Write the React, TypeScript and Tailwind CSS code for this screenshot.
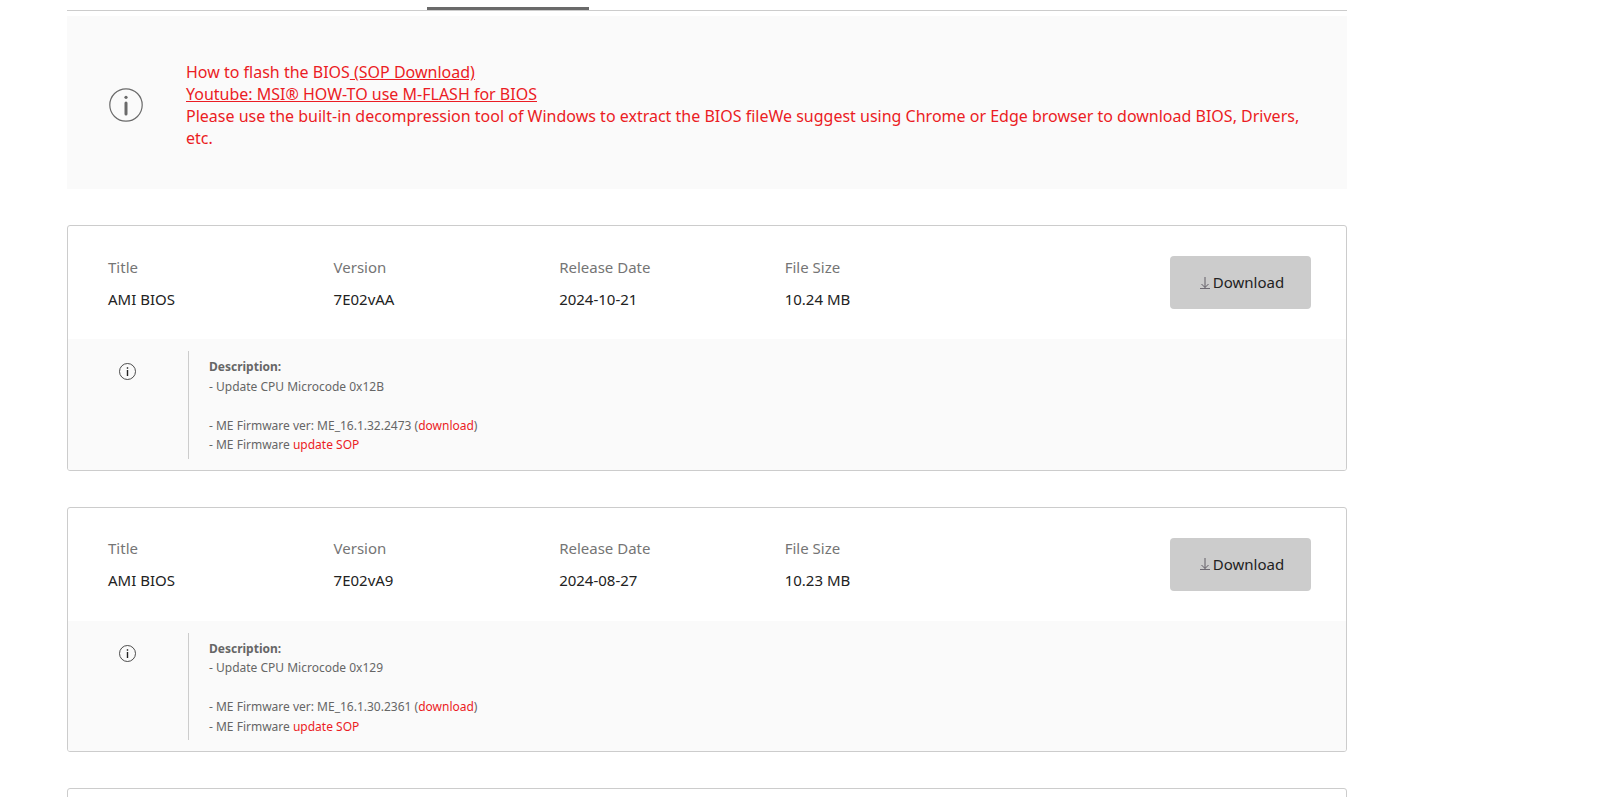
import type { ReactNode } from "react"

type Release = {
  title: string
  version: string
  releaseDate: string
  fileSize: string
  microcode: string
  meVersion: string
}

const releases: Release[] = [
  {
    title: "AMI BIOS",
    version: "7E02vAA",
    releaseDate: "2024-10-21",
    fileSize: "10.24 MB",
    microcode: "0x12B",
    meVersion: "ME_16.1.32.2473",
  },
  {
    title: "AMI BIOS",
    version: "7E02vA9",
    releaseDate: "2024-08-27",
    fileSize: "10.23 MB",
    microcode: "0x129",
    meVersion: "ME_16.1.30.2361",
  },
]

function NoticeIcon() {
  return (
    <svg className="size-[34px] shrink-0 text-[#6a6a6a]" viewBox="0 0 34 34" fill="none" aria-hidden="true">
      <circle cx="17" cy="17" r="16.2" stroke="currentColor" strokeWidth="1.2" />
      <circle cx="17" cy="9.3" r="1.6" fill="currentColor" />
      <path d="M17 15v11" stroke="currentColor" strokeWidth="3" strokeLinecap="round" />
    </svg>
  )
}

function InfoIcon() {
  return (
    <svg className="size-[17px] shrink-0 text-[#222222]" viewBox="0 0 17 17" fill="none" aria-hidden="true">
      <circle cx="8.5" cy="8.5" r="8" stroke="currentColor" strokeWidth="0.8" />
      <path d="M8.5 4.2v1.5M8.5 7v6" stroke="currentColor" strokeWidth="1.4" />
    </svg>
  )
}

function DownloadIcon() {
  return (
    <svg className="h-3 w-[10px] shrink-0 text-[#55505a]" viewBox="0 0 10 12" fill="none" stroke="currentColor" aria-hidden="true">
      <path d="M5 0v10.5M1.5 7L5 10.5L8.5 7" strokeWidth="0.9" />
      <path d="M0 11.5h10" strokeWidth="0.8" />
    </svg>
  )
}

function Field({ label, children }: { label: string; children: ReactNode }) {
  return (
    <div>
      <dt className="mb-3 text-[#757575]">{label}</dt>
      <dd className="text-[#222222]">{children}</dd>
    </div>
  )
}

function ReleaseCard({ release }: { release: Release }) {
  return (
    <article className="overflow-hidden rounded-[3px] border border-[#cccccc]">
      <div className="flex items-center py-[30px] pr-[35px] pl-10">
        <dl className="grid w-3/4 grid-cols-4 text-[15px] leading-5">
          <Field label="Title">{release.title}</Field>
          <Field label="Version">{release.version}</Field>
          <Field label="Release Date">{release.releaseDate}</Field>
          <Field label="File Size">{release.fileSize}</Field>
        </dl>
        <div className="flex w-1/4 justify-end">
          <button
            type="button"
            className="flex h-[53px] w-[141px] items-center justify-center gap-[3px] rounded bg-[#cccccc] pl-[3px] text-[15px] text-[#222222]"
          >
            <DownloadIcon />
            Download
          </button>
        </div>
      </div>

      <div className="flex bg-[#fafafa] pt-3 pb-[11px]">
        <div className="flex w-[120px] justify-center pt-3 pr-0.5">
          <InfoIcon />
        </div>
        <div className="flex-1 border-l border-[#cccccc] pt-1.5 pb-1 pl-5 text-xs/relaxed text-[#666666]">
          <p className="font-bold">Description:</p>
          <p>- Update CPU Microcode {release.microcode}</p>
          <br />
          <p>
            - ME Firmware ver: {release.meVersion} (<a href="#me-firmware" className="text-[#eb1c24]">download</a>)
          </p>
          <p>
            - ME Firmware <a href="#me-sop" className="text-[#eb1c24]">update SOP</a>
          </p>
        </div>
      </div>
    </article>
  )
}

export default function App() {
  return (
    <div className="h-screen overflow-hidden bg-white pr-6 pl-[67px] font-['Noto_Sans','Open_Sans',sans-serif]">
      <main className="max-w-[1280px]">
        {/* bottom edge of the tab bar */}
        <div className="border-b border-[#cccccc] pt-[7px] pl-[360px]">
          <div className="h-[3px] w-[162px] bg-[#6a6a6a]" />
        </div>

        <section className="mt-[5px] flex items-center bg-[#fafafa] pt-[45px] pr-10 pb-10 pl-[42px]">
          <NoticeIcon />
          <div className="ml-[43px] text-base leading-[22px] text-[#eb1c24]">
            <p>
              How to flash the BIOS<a href="#sop" className="underline"> (SOP Download)</a>
            </p>
            <p>
              <a href="#m-flash" className="underline">Youtube: MSI® HOW-TO use M-FLASH for BIOS</a>
            </p>
            <p>
              Please use the built-in decompression tool of Windows to extract the BIOS fileWe suggest using Chrome or
              Edge browser to download BIOS, Drivers, etc.
            </p>
          </div>
        </section>

        <div className="mt-9 flex flex-col gap-9">
          {releases.map((release) => (
            <ReleaseCard key={release.version} release={release} />
          ))}
          <article className="h-28 rounded-[3px] border border-[#cccccc]" />
        </div>
      </main>
    </div>
  )
}
